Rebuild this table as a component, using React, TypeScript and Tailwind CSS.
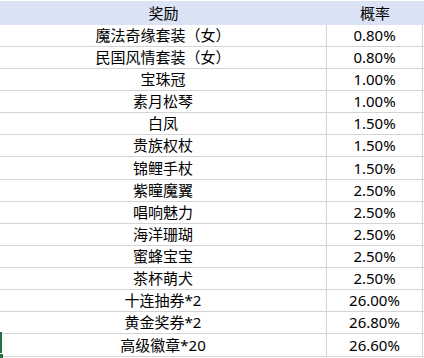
const rows = [
  { name: '魔法奇缘套装（女）', rate: '0.80%' },
  { name: '民国风情套装（女）', rate: '0.80%' },
  { name: '宝珠冠', rate: '1.00%' },
  { name: '素月松琴', rate: '1.00%' },
  { name: '白凤', rate: '1.50%' },
  { name: '贵族权杖', rate: '1.50%' },
  { name: '锦鲤手杖', rate: '1.50%', tall: true },
  { name: '紫瞳魔翼', rate: '2.50%' },
  { name: '唱响魅力', rate: '2.50%' },
  { name: '海洋珊瑚', rate: '2.50%' },
  { name: '蜜蜂宝宝', rate: '2.50%' },
  { name: '茶杯萌犬', rate: '2.50%' },
  { name: '十连抽券*2', rate: '26.00%' },
  { name: '黄金奖券*2', rate: '26.80%' },
  { name: '高级徽章*20', rate: '26.60%', tall: true },
];

export default function App() {
  return (
    <div className="relative w-[424px] h-[358px] overflow-hidden bg-white pt-[1px] text-[15px] text-black font-['Noto_Sans','Noto_Sans_CJK_SC',sans-serif]">
      <div className="flex h-[24px] items-center bg-[#dae3f3]">
        <div className="w-[327px] text-center">奖励</div>
        <div className="w-[96px] text-center">概率</div>
      </div>

      {rows.map((r) => (
        <div key={r.name} className={`flex border-b border-[#d4d4d4] ${r.tall ? 'h-[23px]' : 'h-[22px]'}`}>
          <div className="flex w-[327px] items-center justify-center border-r border-[#d4d4d4]">{r.name}</div>
          <div className="flex w-[96px] items-center justify-center border-r border-[#d4d4d4]">{r.rate}</div>
        </div>
      ))}

      {/* excel selection edge */}
      <div className="absolute left-0 top-[332px] h-[21px] w-[2px] bg-[#217346]" />
      <div className="absolute left-0 top-[354px] h-[4px] w-[3px] bg-[#217346]" />
    </div>
  );
}
